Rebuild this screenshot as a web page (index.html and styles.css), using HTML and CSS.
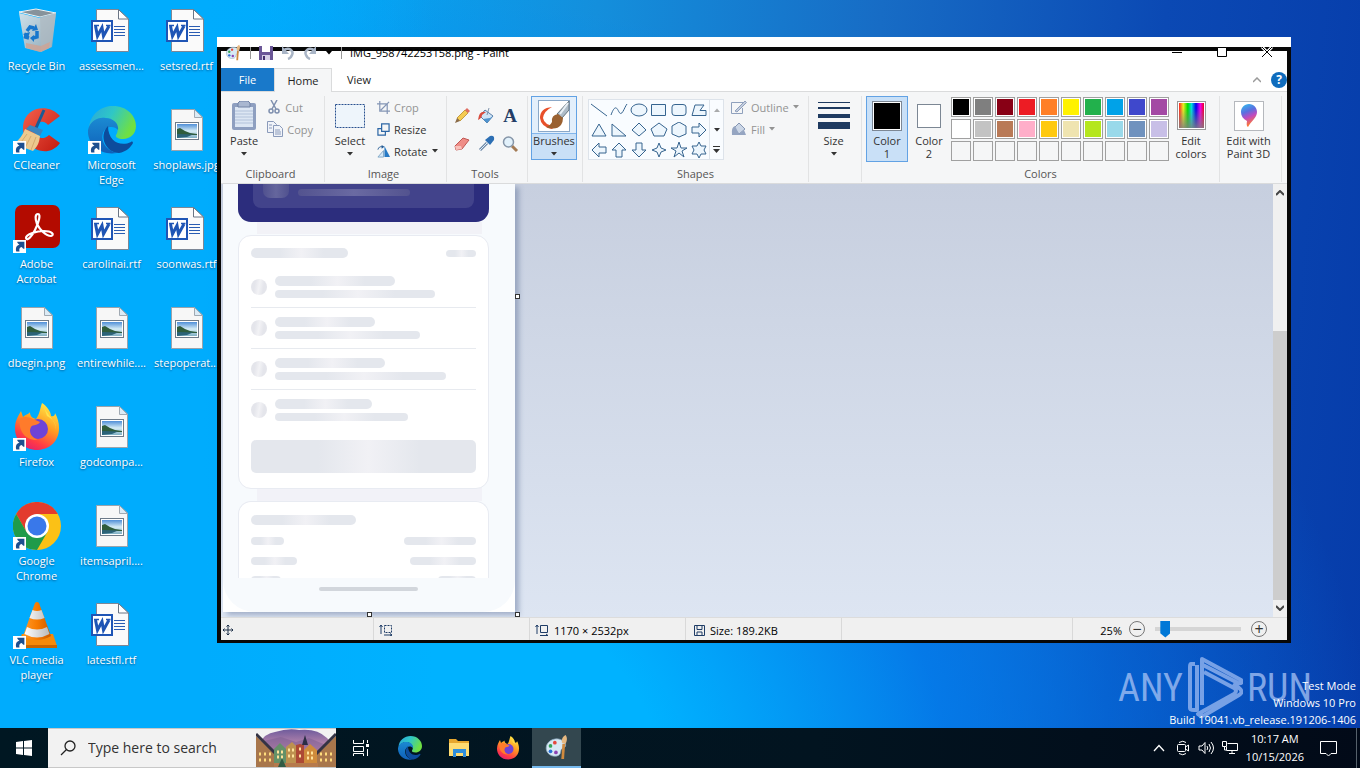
FILE: index.html
```html
<!DOCTYPE html>
<html lang="en">
<head>
<meta charset="utf-8">
<title>Desktop</title>
<link rel="stylesheet" href="styles.css">
</head>
<body>
<svg class="defs" aria-hidden="true">
  <defs>
    <linearGradient id="gSky" x1="0" y1="0" x2="0" y2="1"><stop offset="0" stop-color="#4f8fd8"/><stop offset=".5" stop-color="#d5ecf5"/><stop offset="1" stop-color="#7fb0c4"/></linearGradient>
    <linearGradient id="gEdgeA" x1="0" y1="0" x2="1" y2=".4"><stop offset="0" stop-color="#2aa5dc"/><stop offset=".5" stop-color="#2fc7c6"/><stop offset="1" stop-color="#6fe043"/></linearGradient>
    <linearGradient id="gEdgeB" x1="0" y1="0" x2="0" y2="1"><stop offset="0" stop-color="#1b8ad2"/><stop offset="1" stop-color="#0f5fb8"/></linearGradient>
    <linearGradient id="gFox" x1=".8" y1="0" x2=".3" y2="1"><stop offset="0" stop-color="#fff14a"/><stop offset=".45" stop-color="#ff9a22"/><stop offset=".8" stop-color="#ff3b45"/><stop offset="1" stop-color="#e4206e"/></linearGradient>
    <linearGradient id="gBin" x1="0" y1="0" x2="1" y2="1"><stop offset="0" stop-color="#dfe5e8"/><stop offset="1" stop-color="#9aa8b2"/></linearGradient>
    <linearGradient id="gCone" x1="0" x2="1" y1="0" y2="0"><stop offset="0" stop-color="#ff9a2a"/><stop offset=".5" stop-color="#f77b00"/><stop offset="1" stop-color="#c95a00"/></linearGradient>
    <linearGradient id="gWhiteCone" x1="0" x2="1" y1="0" y2="0"><stop offset="0" stop-color="#fff"/><stop offset="1" stop-color="#b9b9b9"/></linearGradient>
    <linearGradient id="gRed" x1="0" y1="0" x2="1" y2="1"><stop offset="0" stop-color="#f4604c"/><stop offset="1" stop-color="#c21a10"/></linearGradient>
    <linearGradient id="gPin" x1="0" y1="0" x2=".3" y2="1"><stop offset="0" stop-color="#2fc3ee"/><stop offset=".4" stop-color="#5a6fe0"/><stop offset=".65" stop-color="#c04ac0"/><stop offset="1" stop-color="#ff7a30"/></linearGradient>
    <linearGradient id="gDusk" x1="0" y1="0" x2="0" y2="1"><stop offset="0" stop-color="#6e5b9c"/><stop offset=".5" stop-color="#c88fb0"/><stop offset="1" stop-color="#f2b47c"/></linearGradient>
    <linearGradient id="gRainbow" x1="0" x2="1" y1="0" y2="0"><stop offset="0" stop-color="#f22"/><stop offset=".17" stop-color="#ee2"/><stop offset=".35" stop-color="#0d0"/><stop offset=".5" stop-color="#0dd"/><stop offset=".68" stop-color="#00e"/><stop offset=".85" stop-color="#e0e"/><stop offset="1" stop-color="#e02"/></linearGradient>
    <linearGradient id="gGray" x1="0" y1="0" x2="0" y2="1"><stop offset=".2" stop-color="#808080" stop-opacity="0"/><stop offset="1" stop-color="#808080" stop-opacity=".85"/></linearGradient>
  </defs>
  <symbol id="shortcut" viewBox="0 0 12 12"><rect width="12" height="12" fill="#fff"/><path d="M3 10.500C2 7 3.500 4.500 6 4.500L4 2.500V1.500H10.500V8H9.500L8 6.500C6 7 5.500 8.500 6 10.500z" fill="#1d4f8f"/></symbol>
  <symbol id="word" viewBox="0 0 48 48">
    <path d="M8.500 2.500H30.500L40.500 12V44.500H8.500z" fill="#fafafa" stroke="#7d8796"/>
    <path d="M30.500 2.500V12H40.500z" fill="#fff" stroke="#6b7584"/>
    <path d="M26 19.500H37M26 22.500H37M26 25.500H37M26 28.500H37" stroke="#2a5cb2"/>
    <rect x="4" y="14" width="20" height="20" fill="#fff" stroke="#1f55b5" stroke-width="2"/>
    <path d="M7.500 19L9.500 29L14 20.500L15.500 29L21 19" fill="none" stroke="#1f55b5" stroke-width="3"/>
    <path d="M6 18.500H11M18 18.500H22.500" stroke="#1f55b5" stroke-width="1.500"/>
  </symbol>
  <symbol id="photo" viewBox="0 0 48 48">
    <path d="M8.500 3.500H31.500L39.500 11V44.500H8.500z" fill="#f7f7f7" stroke="#9aa3ac"/>
    <path d="M31.500 3.500V11.500H39.500z" fill="#dcebf5" stroke="#a0a9b2"/>
    <rect x="12.500" y="16.500" width="23" height="17" fill="#fff" stroke="#6d7a88"/>
    <rect x="14" y="18" width="20" height="14" fill="url(#gSky)"/>
    <path d="M14 23L17 22L22 25L27 27L34 28V29H14z" fill="#2f5c3c"/>
    <path d="M14 28L30 28.500L24 31L14 32z" fill="#2c6378"/>
  </symbol>
  <symbol id="bin" viewBox="0 0 48 48">
    <path d="M6 6L12 41L28 45L39 40L43 6L27 11z" fill="url(#gBin)" opacity=".92"/>
    <path d="M6 5L23 2L43 6L27 10z" fill="#87939b" stroke="#eef3f5"/>
    <path d="M27 10L28 45L38 40L43 6z" fill="#aeb8bf" opacity=".7"/>
    <path d="M13 36L28 39L37 35L36 41L27 45L13 41z" fill="#cfa392" opacity=".8"/>
    <g fill="none" stroke="#1777cd" stroke-width="3.500"><path d="M14 24L17 20L21 21"/><path d="M24 24L24 30L20 31"/><path d="M16 31L12.500 30L13.500 26"/></g>
    <path d="M19 24L25 23L23 17zM21 28V35L17 31zM10 27L17 25L15 31z" fill="#1777cd"/>
  </symbol>
  <symbol id="ccleaner" viewBox="0 0 48 48">
    <path d="M47 10C36-3 12 0 10 20C9 43 35 54 47 37L36 29C28 36 21 30 22 23C24 14 32 14 35 19z" fill="url(#gRed)"/>
    <path d="M31 4L23 22" stroke="#1a5b94" stroke-width="3"/>
    <path d="M17 19L30 24L27 30L13 23z" fill="#3a86c0"/>
    <path d="M12 23L27 30C26 38 24 41 20 45L1 38C6 34 10 29 12 23z" fill="#ecc98f"/>
    <path d="M14 28L6 39M18 30L12 42M23 31L18 44" stroke="#d4ab6e"/>
  </symbol>
  <symbol id="edge" viewBox="0 0 48 48">
    <path d="M1 22C2 8 13 0 25 0C39 0 48 10 48 20C48 28 42 33 35 33C30 33 27 31 28 29C32 24 29 14 18 12C10 11 4 16 1 22z" fill="url(#gEdgeA)"/>
    <path d="M0 24C2 15 10 11 17 12C26 12 31 18 30 24C27 20 18 19 15 27C12 36 19 45 29 47C12 50-1 38 0 24z" fill="url(#gEdgeB)"/>
    <path d="M20 20C10 30 18 47 31 47C38 46 43 41 45 37C45 36 44 35 43 36C33 41 20 36 20 20z" fill="#0d4c9c"/>
  </symbol>
  <symbol id="acrobat" viewBox="0 0 48 48">
    <rect x="2" y="0" width="45" height="43" rx="7" fill="#b30b00"/>
    <path d="M25 9C22 9 22 14 24 19C27 25 33 31 38 31C42 30 39 26 31 26C24 26 13 29 13 33C14 37 19 31 22 25C26 17 28 9 25 9z" fill="none" stroke="#fff" stroke-width="2.200"/>
  </symbol>
  <symbol id="firefox" viewBox="0 0 48 48">
    <path d="M29 0C34 3 38 9 38 13C41 14 42 12 42 10C50 24 47 45 25 47C10 47 2 37 2 25C2 17 6 12 8 8L10 14C13 11 16 11 17 9C17 13 19 15 23 16C27 11 27 5 29 0z" fill="url(#gFox)"/>
    <circle cx="25" cy="26" r="10" fill="#6f43d6"/>
    <path d="M7 16C13 11 21 17 27 19C25 23 20 21 18 24C15 29 19 35 25 37C12 38 5 27 7 16z" fill="#ff7b2b"/>
    <path d="M31 4C34 12 43 17 43 27C43 20 40 16 34 13z" fill="#ffe34c"/>
  </symbol>
  <symbol id="chrome" viewBox="0 0 48 48">
    <circle cx="24" cy="24" r="24" fill="#fbc116"/>
    <path d="M3.200 12A24 24 0 0 1 44.800 12H24L13.600 30z" fill="#e33b2e"/>
    <path d="M3.200 12A24 24 0 0 0 24 48L34.400 30L24 36L13.600 30z" fill="#1f9b4a"/>
    <circle cx="24" cy="24" r="12" fill="#fff"/><circle cx="24" cy="24" r="9.500" fill="#3978ea"/>
  </symbol>
  <symbol id="vlc" viewBox="0 0 48 48">
    <path d="M9 33H40L44 45H4z" fill="#f58a0a"/><path d="M4 44H44V47H4z" fill="#c96500"/>
    <path d="M22 2Q24 0 26 2L38 35Q24 43 10 35z" fill="url(#gCone)"/>
    <path d="M19.500 9Q24 11 28.500 9L31.500 17Q24 20 16.500 17zM14 26Q24 31 34 26L36.500 33Q24 40 11.500 33z" fill="url(#gWhiteCone)"/>
  </symbol>
  <symbol id="palette" viewBox="0 0 24 24">
    <path d="M2 13C2 7 9 3 15 5C21 7 21 12 18 13C14 14 17 18 13 20C7 22 2 18 2 13z" fill="#d7e9f5" stroke="#8aa6bc" stroke-width=".7"/>
    <circle cx="6" cy="11" r="1.700" fill="#35a35a"/><circle cx="10" cy="8" r="1.700" fill="#e5483d"/><circle cx="6" cy="16" r="1.700" fill="#2a70d6"/><circle cx="11" cy="17" r="1.700" fill="#8b43b4"/>
    <path d="M17 9L16 23L18.500 23L19.500 9z" fill="#d08a3e"/><path d="M16.500 8C16 4 18 2 20 1C22 4 21 7 20 9z" fill="#e7b982"/>
  </symbol>
  <symbol id="save" viewBox="0 0 14 14"><path d="M0 0H14V14H0z" fill="#6b5797"/><path d="M3 0H11V6H3z" fill="#fff"/><path d="M3 9H11V14H3z" fill="#d7d0e6"/><path d="M4 10H6V14H4z" fill="#44306e"/></symbol>
  <symbol id="undo" viewBox="0 0 14 14"><path d="M2 5C8 0 13 5 11 9Q10 12 7 13" fill="none" stroke="#a9b5c6" stroke-width="2.500"/><path d="M1 0V8H8z" fill="#a9b5c6"/></symbol>
  <symbol id="caret" viewBox="0 0 6 4"><path d="M0 0H6L3 3.500z" fill="currentColor"/></symbol>
  <symbol id="resize" viewBox="0 0 14 14" fill="none" stroke="#2c66a5" stroke-width="1.300"><path d="M5 1H13V9H5zM5 6H1V13H9V9"/></symbol>
  <symbol id="crop" viewBox="0 0 14 14" fill="none" stroke="#8495b5" stroke-width="1.300"><path d="M3 0V11H14M0 3H11V14M4 10L13 1"/></symbol>
  <symbol id="rotate" viewBox="0 0 14 14"><path d="M8 1V13H14z" fill="#267ac5"/><path d="M7 6V13H1z" fill="#d5e9f8" stroke="#7fa6c7"/><path d="M1 5Q2 1 6 2" fill="none" stroke="#245b94"/><path d="M5 0L8 2L5 4z" fill="#245b94"/></symbol>
  <symbol id="dims" viewBox="0 0 14 12" fill="none" stroke="#1e3c66"><path d="M2 10V1M0.500 3L2 1L3.500 3M5 11.500H13M11 10L13 11.500L11 12M5.500 1.500H12.500V8.500H5.500z"/></symbol>
  <symbol id="seldims" viewBox="0 0 14 12" fill="none" stroke="#1e3c66"><path d="M2 10V1M0.500 3L2 1L3.500 3M5 11H13M11 9.500L13 11L11 12"/><path d="M5.500 1.500H12.500V8.500H5.500z" stroke-dasharray="2 1"/></symbol>
</svg>

<main class="desktop">
  <div class="icons" id="icons"></div>

  <div class="watermark" aria-hidden="true">
    <span>ANY</span>
    <svg width="56" height="62" viewBox="0 0 56 62" fill="none" stroke="#9dbbf2" stroke-opacity=".75" stroke-width="4" stroke-linejoin="round"><path d="M8 7H4Q3 7 3 10V51Q3 53 7 53H10V8M15 48V2L54 23Q56 27 51 26L16 8M17 15L47 31Q51 34 47 37L11 57Q14 60 18 58L52 38Q57 35 52 31L46 27"/></svg>
    <span>RUN</span>
  </div>
  <div class="build"><span>Test Mode</span><span>Windows 10 Pro</span><span>Build 19041.vb_release.191206-1406</span></div>

  <section class="window" aria-label="Paint">
    <header class="titlebar">
      <svg width="17" height="17"><use href="#palette"/></svg><i class="tsep"></i>
      <button aria-label="Save" class="qa"><svg width="14" height="14"><use href="#save"/></svg></button>
      <button aria-label="Undo" class="qa"><svg width="14" height="14"><use href="#undo"/></svg></button>
      <button aria-label="Redo" class="qa redo"><svg width="14" height="14"><use href="#undo"/></svg></button>
      <button aria-label="Customize toolbar" class="qa more"><svg width="6" height="4"><use href="#caret"/></svg></button><i class="tsep"></i>
      <span class="title">IMG_958742253158.png - Paint</span>
      <span class="winbtns">
        <button aria-label="Minimize"><svg width="12" height="12" stroke="#000"><path d="M1 5.500H11"/></svg></button>
        <button aria-label="Maximize"><svg width="12" height="12" stroke="#000" fill="#fff"><path d="M1.500 .5H10.500V9.500H1.500z"/></svg></button>
        <button aria-label="Close"><svg width="12" height="12"><path d="M1 0L11 10M11 0L1 10" stroke="#fff" stroke-width="3"/><path d="M1 0L11 10M11 0L1 10" stroke="#000"/></svg></button>
      </span>
    </header>
    <nav class="tabs">
      <button class="tab file">File</button><button class="tab home">Home</button><button class="tab">View</button>
      <button class="collapse" aria-label="Minimize ribbon"><svg width="8" height="6" fill="none" stroke="#9a9a9a" stroke-width="1.500"><path d="M0 5L4 1L8 5"/></svg></button>
      <button class="help" aria-label="Help">?</button>
    </nav>
    <div class="ribbon">
      <div class="group clipboard">
        <div class="tools-row">
          <button class="big"><span class="pic"><svg width="26" height="30" viewBox="0 0 26 30"><rect x="1" y="2" width="24" height="27" rx="2" fill="#8e9fc0"/><path d="M4 6H22V26H4z" fill="#dce6f3"/><path d="M7 2L9 0H17L19 2V6H7z" fill="#a9b7d0" stroke="#7182a5"/><path d="M4 10H22M4 13H22M4 16H22M4 19H22M4 22H22" stroke="#b2c2da"/></svg></span><span>Paste</span><svg class="caret"><use href="#caret"/></svg></button>
          <div class="list dim">
            <button><svg width="14" height="14" viewBox="0 0 14 14" fill="none" stroke="#7e8fae" stroke-width="1.500"><path d="M4 0L9 9M10 0L5 9"/><circle cx="4" cy="11" r="2"/><circle cx="10" cy="11" r="2"/></svg><span>Cut</span></button>
            <button><svg width="16" height="16" viewBox="0 0 16 16" fill="#f0f3f9" stroke="#8a9aba"><path d="M.5.500H6.500L9.500 3.500V11.500H.5z"/><path d="M6.500 4.500H12.500L15.500 7.500V15.500H6.500z"/><path d="M2 4H5M2 7H5M8 9H13M8 11H14M8 13H14"/></svg><span>Copy</span></button>
          </div>
        </div>
        <div class="caption">Clipboard</div>
      </div>
      <div class="group image">
        <div class="tools-row">
          <button class="big"><span class="pic"><svg width="30" height="24"><rect x=".5" y=".5" width="29" height="23" fill="#eef5fb" stroke="#28508f" stroke-dasharray="2 1"/></svg></span><span>Select</span><svg class="caret"><use href="#caret"/></svg></button>
          <div class="list">
            <button class="off"><svg width="13" height="13"><use href="#crop"/></svg><span>Crop</span></button>
            <button><svg width="13" height="13"><use href="#resize"/></svg><span>Resize</span></button>
            <button><svg width="13" height="13"><use href="#rotate"/></svg><span>Rotate</span><svg class="caret"><use href="#caret"/></svg></button>
          </div>
        </div>
        <div class="caption">Image</div>
      </div>
      <div class="group tools">
        <div class="toolgrid">
          <button aria-label="Pencil"><svg width="18" height="18" viewBox="0 0 18 18"><path d="M4 11L12 3L15 6L7 14z" fill="#f5cb52" stroke="#b78a29" stroke-width=".8"/><path d="M12 3L14 1L17 4L15 6z" fill="#e06d61"/><path d="M4 11L2 16L7 14z" fill="#8a6c4a"/></svg></button>
          <button aria-label="Fill with color"><svg width="18" height="18" viewBox="0 0 18 18"><path d="M8 3L16 9L10 16L3 9z" fill="#cfe4f6" stroke="#587ea7"/><path d="M13 11L16 9L10 16L6 12z" fill="#4e93cf"/><path d="M9 5Q2 3 1 13Q5 11 5 8z" fill="#d84b3d"/><path d="M10 8L12 1" stroke="#8094ad"/></svg></button>
          <button aria-label="Text" class="text-tool">A</button>
          <button aria-label="Eraser"><svg width="18" height="18" viewBox="0 0 18 18"><path d="M2 11L10 3L16 5L9 14L3 15z" fill="#ef8d87" stroke="#bf5854"/><path d="M2 11L8 11L9 14L3 15z" fill="#f9c1bb"/></svg></button>
          <button aria-label="Color picker"><svg width="18" height="18" viewBox="0 0 18 18"><path d="M3 15L10 8" stroke="#6e8aa8" stroke-width="3"/><path d="M3 15L10 8" stroke="#e0edf8" stroke-width="1"/><path d="M8 5L13 10L17 5Q18 0 13 1z" fill="#2c6fb4"/></svg></button>
          <button aria-label="Magnifier"><svg width="18" height="18" viewBox="0 0 18 18"><path d="M11 11L16 16" stroke="#a37b55" stroke-width="3"/><circle cx="7.500" cy="7" r="5" fill="#e2f1fb" stroke="#8595a8" stroke-width="1.500"/></svg></button>
        </div>
        <div class="caption">Tools</div>
      </div>
      <div class="group brushes">
        <button class="big selected"><span class="pic"><svg width="32" height="32" viewBox="0 0 32 32"><rect x=".5" y=".5" width="31" height="31" fill="#fff" stroke="#8aa8c8"/><path d="M14 7Q2 8 2 18Q3 27 14 29L17 26Q6 25 5 18Q6 11 14 7z" fill="#e8502a"/><path d="M31 1L19 14L24 18L31 10z" fill="#aebcc8" stroke="#66757f"/><path d="M30 3L22 14" stroke="#e9f0f5" stroke-width="2"/><path d="M20 14Q13 15 14 22Q12 26 8 27Q18 31 23 25Q25 22 25 18z" fill="#9a6131"/></svg></span><span>Brushes</span><svg class="caret"><use href="#caret"/></svg></button>
      </div>
      <div class="group shapes">
        <div class="tools-row">
          <div class="gallery">
            <div class="shapegrid" id="shapes"></div>
            <div class="scroller"><button aria-label="Up"><svg class="caret flip"><use href="#caret"/></svg></button><button aria-label="Down"><svg class="caret"><use href="#caret"/></svg></button><button aria-label="More shapes"><svg width="7" height="8" viewBox="0 0 7 8"><path d="M0 .5H7" stroke="#333"/><path d="M0 3H7L3.500 7z" fill="#333"/></svg></button></div>
          </div>
          <div class="list dim">
            <button><svg width="16" height="15" viewBox="0 0 16 15" fill="none" stroke="#8fa0bc"><path d="M12 2.500H.5V13.500H11.500V8"/><path d="M4 11L14 1L15.500 2.500L6 12z" fill="#c4cddd"/></svg><span>Outline</span><svg class="caret"><use href="#caret"/></svg></button>
            <button><svg width="16" height="16" viewBox="0 0 16 16"><path d="M8 2L14 8L8 13L3 7z" fill="#cbd6e6" stroke="#8495b2"/><path d="M4 5Q0 6 1 14H15L13 9L8 13z" fill="#95a5c1"/></svg><span>Fill</span><svg class="caret"><use href="#caret"/></svg></button>
          </div>
        </div>
        <div class="caption">Shapes</div>
      </div>
      <div class="group size">
        <button class="big"><span class="pic"><svg width="32" height="28" fill="#1e3a60"><path d="M0 0H32V1H0zM0 5H32V7H0zM0 12H32V16H0zM0 20H32V27H0z"/></svg></span><span>Size</span><svg class="caret"><use href="#caret"/></svg></button>
      </div>
      <div class="group colors">
        <div class="tools-row">
          <button class="big color selected"><span class="pic"><i class="swatch black"></i></span><span>Color<br>1</span></button>
          <button class="big color"><span class="pic"><i class="swatch white"></i></span><span>Color<br>2</span></button>
          <div class="palette" id="palette-grid"></div>
          <button class="big edit"><span class="pic"><svg width="29" height="29"><rect x=".5" y=".5" width="28" height="28" fill="#fff" stroke="#999"/><rect x="2" y="2" width="25" height="25" fill="url(#gRainbow)"/><rect x="2" y="2" width="25" height="25" fill="url(#gGray)"/></svg></span><span>Edit<br>colors</span></button>
        </div>
        <div class="caption">Colors</div>
      </div>
      <div class="group three-d">
        <button class="big"><span class="pic"><svg width="30" height="30"><rect x=".5" y=".5" width="29" height="29" fill="#fff" stroke="#b5b8bd"/><path d="M15 3C20 3 23 7 23 11C23 17 17 20 14 26Q12 25 13 20C9 18 7 15 7 11C7 7 10 3 15 3z" fill="url(#gPin)"/></svg></span><span>Edit with<br>Paint 3D</span></button>
      </div>
    </div>

    <div class="workspace">
      <div class="canvas">
        <div class="sheet">
          <div class="sheet-page">
            <div class="hero"><div class="hero-panel"><i></i><b></b></div></div>
            <div class="card first">
              <div class="pair"><i class="bar w97"></i><i class="bar tiny w30"></i></div>
              <div class="entry"><i class="dot"></i><div><i class="bar w120"></i><i class="bar thin w160"></i></div></div>
              <div class="entry"><i class="dot"></i><div><i class="bar w100"></i><i class="bar thin w145"></i></div></div>
              <div class="entry"><i class="dot"></i><div><i class="bar w110"></i><i class="bar thin w171"></i></div></div>
              <div class="entry"><i class="dot"></i><div><i class="bar w97"></i><i class="bar thin w133"></i></div></div>
              <i class="bar action"></i>
            </div>
            <div class="card second">
              <i class="bar w105"></i>
              <div class="pair"><i class="bar thin w33"></i><i class="bar thin w72"></i></div>
              <div class="pair"><i class="bar thin w46"></i><i class="bar thin w66"></i></div>
              <div class="pair"><i class="bar thin w30"></i><i class="bar thin w38"></i></div>
            </div>
            <i class="home-line"></i>
          </div>
          <i class="handle right"></i><i class="handle bottom"></i><i class="handle corner"></i>
        </div>
      </div>
      <div class="scrollbar"><svg width="8" height="6"><path d="M0 5L4 1L8 5" fill="none" stroke="#444" stroke-width="2"/></svg><i></i><svg width="8" height="6"><path d="M0 1L4 5L8 1" fill="none" stroke="#444" stroke-width="2"/></svg></div>
    </div>

    <footer class="status">
      <span class="cell first-cell"><svg width="12" height="12" fill="none" stroke="#1e3049"><path d="M6 1V11M1 6H11M4.500 2.500L6 1L7.500 2.500M4.500 9.500L6 11L7.500 9.500M2.500 4.500L1 6L2.500 7.500M9.500 4.500L11 6L9.500 7.500"/></svg></span>
      <span class="cell"><svg width="14" height="12"><use href="#seldims"/></svg></span>
      <span class="cell"><svg width="14" height="12"><use href="#dims"/></svg>1170 × 2532px</span>
      <span class="cell disk"><svg width="11" height="11" fill="none" stroke="#1e3c66"><path d="M.5.500H10.500V10.500H.5zM3 .5V4.500H8V.5M3 10V7H8V10"/></svg>Size: 189.2KB</span>
      <span class="cell rest"></span>
      <label class="zoomtext" for="zoom">25%</label>
      <button class="round" aria-label="Zoom out">−</button>
      <input id="zoom" type="range" min="0" max="100" value="7">
      <button class="round" aria-label="Zoom in">+</button>
    </footer>
  </section>
</main>

<footer class="taskbar">
  <button class="task" aria-label="Start"><svg width="16" height="16" fill="#fff"><path d="M0 2L7 1V7.500H0zM8 1L16 0V7.500H8zM0 8.500H7V15L0 14zM8 8.500H16V16L8 15z"/></svg></button>
  <label class="search"><svg width="16" height="16" fill="none" stroke="#222" stroke-width="1.300"><circle cx="10" cy="6" r="5"/><path d="M6.500 9.500L1 15"/></svg>
    <input type="text" placeholder="Type here to search" aria-label="Search">
    <svg class="town" width="80" height="38" viewBox="0 0 80 38"><path d="M3 15Q9 4 19 3Q32-1 43 1Q61-1 71 9L77 16V38H3z" fill="url(#gDusk)"/><path d="M8 12L25 8L40 13L53 9L70 16V25H8z" fill="#806095" opacity=".6"/><path d="M0 7L20 26V38H0zM80 7L60 26V38H80z" fill="#a8764b"/><path d="M0 5L22 27M80 5L58 27" stroke="#343344" stroke-width="3"/><path d="M18 38V20L24 14L30 20V38z" fill="#649168"/><path d="M30 38V18L36 13L41 18V38z" fill="#bd914f"/><path d="M40 38V16L44 15L48 16V38z" fill="#ad4935"/><path d="M46 16L49 6L52 16z" fill="#2b2d45"/><path d="M48 38V21L54 15L61 21V38z" fill="#cf8b3c"/><path d="M21 23H27M21 28H27M32 21H39M32 27H39M43 20H47M43 27H47M51 24H58M51 29H58" stroke="#ffe29a" stroke-width="3" stroke-dasharray="2 2"/><path d="M3 25H16M3 31H16M64 25H77M64 31H77" stroke="#ffdc7c" stroke-width="3" stroke-dasharray="2 3"/><path d="M18 38V34H62V38z" fill="#b67a4d"/><path d="M22 38L26 29L30 38z" fill="#315c45"/></svg>
  </label>
  <button class="task" aria-label="Task view"><svg width="18" height="16" fill="none" stroke="#fff"><path d="M1.500 0V3.500H11.500V0M1.500 6.500H11.500V11.500H1.500zM1.500 16V13.500H11.500V16M15.500 0V3M15.500 9V16"/><path d="M15.500 4V7" stroke-width="3"/></svg></button>
  <button class="task" aria-label="Edge"><svg width="24" height="24"><use href="#edge"/></svg></button>
  <button class="task" aria-label="File Explorer"><svg width="22" height="20"><path d="M1 1H8L10 3H21V18H1z" fill="#e7a72e"/><path d="M1 5H21V18H1z" fill="#ffdc72"/><path d="M5 11H18V19H15V15H8V19H5z" fill="#2f8edb"/></svg></button>
  <button class="task" aria-label="Firefox"><svg width="24" height="24"><use href="#firefox"/></svg></button>
  <button class="task active" aria-label="Paint"><svg width="26" height="26"><use href="#palette"/></svg></button>
  <div class="tray">
    <button aria-label="Hidden icons"><svg width="12" height="8" fill="none" stroke="#fff" stroke-width="1.300"><path d="M1 7L6 1.500L11 7"/></svg></button>
    <button aria-label="Meet now"><svg width="14" height="16" fill="none" stroke="#fff"><rect x="1.500" y="4.500" width="8" height="7" rx="1"/><path d="M9.500 7L12.500 5V11L9.500 9M3 2.500Q7 0 10 2.500M3 13.500Q7 16 10 13.500"/></svg></button>
    <button aria-label="Volume"><svg width="17" height="14" fill="none" stroke="#fff"><path d="M1 5H4L7 1.500V12.500L4 9H1zM9 5Q10.500 7 9 9M11 3Q14 7 11 11M13 1Q18 7 13 13"/></svg></button>
    <button aria-label="Network"><svg width="17" height="14" fill="none" stroke="#fff"><path d="M5.500 2.500H15.500V9.500H4.500V6M7 12.500H13M10 9.500V12.500M.5.500H4.500V5.500H.5zM2.500 5.500V9H4"/></svg></button>
    <time class="clock"><span>10:17 AM</span><span>10/15/2026</span></time>
    <button class="notice" aria-label="Notifications"><svg width="17" height="17" fill="none" stroke="#fff"><path d="M.5 1.500H16.500V13.500H11L8.500 16L6 13.500H.5z"/></svg></button>
    <i class="peek"></i>
  </div>
</footer>
<script src="app.js"></script>
</body>
</html>
```
FILE: styles.css
```css
* { box-sizing: border-box; }
body { margin: 0; height: 100vh; display: flex; flex-direction: column; overflow: hidden; font: 11px/15px "Open Sans", "Noto Sans", sans-serif; color: #222; }
button { font: inherit; color: inherit; border: 0; background: none; padding: 0; display: flex; align-items: center; justify-content: center; }
svg { flex: none; display: block; }
.defs { position: absolute; width: 0; height: 0; }
i { display: block; }

.desktop { position: relative; flex: 1; min-height: 0; background:
  linear-gradient(90deg, #00acfd 15%, rgba(0, 172, 253, 0) 32%),
  radial-gradient(ellipse at 26% 110%, #00b2ff 22%, rgba(0, 130, 245, .75) 42%, rgba(0, 100, 235, 0) 72%),
  linear-gradient(95deg, #00a8fc 0%, #00acfc 18%, #148fdc 42%, #176cc5 62%, #0b49b4 82%, #063caa 100%); }
.icons { display: grid; grid-template-rows: repeat(7, 99px); grid-auto-flow: column; grid-auto-columns: 75px; justify-content: start; margin-left: -1px; }
.shortcut { display: flex; flex-direction: column; align-items: center; gap: 3px; padding-top: 7px; color: #fff; text-decoration: none; text-align: center; white-space: nowrap; text-shadow: 0 1px 2px rgba(0, 30, 70, .6); }
.glyph { position: relative; }
.glyph .arrow { position: absolute; left: 0; bottom: 0; }

.watermark { position: absolute; right: 48px; bottom: 9px; display: flex; align-items: center; gap: 4px; font: 38px/62px "Liberation Sans Narrow", "Roboto Condensed", "DejaVu Sans Condensed", sans-serif; color: rgba(168, 195, 245, .75); }
.build { position: absolute; right: 4px; bottom: 0; display: flex; flex-direction: column; text-align: right; color: #fff; line-height: 17px; }

.window { position: absolute; left: 217px; right: 69px; top: 37px; bottom: 85px; display: flex; flex-direction: column; padding: 0 4px 3px; background: #fff; }
.window::before { content: ""; position: absolute; inset: 10px 0 0; border: 4px solid #080808; border-bottom-width: 3px; }
.window > * { position: relative; }
.titlebar { height: 31px; display: flex; align-items: center; gap: 8px; padding: 0 14px 0 4px; color: #000; }
.tsep { width: 1px; height: 12px; background: #999; }
.qa { width: 14px; height: 20px; }
.redo { transform: scaleX(-1); }
.more { width: 8px; }
.title { flex: 1; }
.winbtns { display: flex; gap: 33px; }
.tabs { height: 24px; display: flex; align-items: stretch; border-bottom: 1px solid #dadbdc; }
.tab { padding: 0 15px; }
.file { width: 53px; background: #1979ca; color: #fff; }
.home { width: 58px; background: #f5f6f7; border: 1px solid #dadbdc; border-bottom: 0; margin-bottom: -1px; }
.collapse { margin-left: auto; width: 28px; }
.help { width: 16px; height: 16px; border-radius: 50%; background: #0f6cbd; color: #fff; font-weight: 700; font-size: 12px; align-self: center; }

.ribbon { height: 92px; display: flex; background: #f5f6f7; border-bottom: 1px solid #dadbdc; padding-top: 4px; overflow: hidden; color: #333; }
.group { flex: none; display: flex; flex-direction: column; justify-content: space-between; border-right: 1px solid #e2e3e4; padding: 0 4px 1px; height: 86px; }
.clipboard { width: 104px; padding: 0 11px 1px 7px; }
.image { width: 122px; padding: 0 5px 1px 1px; }
.tools { width: 81px; padding: 0 7px 1px 3px; }
.brushes { width: 55px; padding: 0 5px 0 3px; }
.shapes { width: 226px; }
.size { width: 53px; padding: 0 5px 0 2px; }
.colors { width: 358px; }
.three-d { width: 62px; padding: 0 4px 0 0; }
.caption { text-align: center; color: #555; }
.tools-row { display: flex; align-items: flex-start; }
.big { flex-direction: column; justify-content: flex-start; width: 100%; line-height: 13px; text-align: center; white-space: nowrap; border: 1px solid transparent; }
.tools-row .big { width: 44px; }
.clipboard .tools-row .big { width: 34px; }
.pic { height: 37px; display: flex; align-items: center; }
.caret { width: 6px; height: 4px; }
.big .caret { margin-top: 5px; }
.flip { transform: rotate(180deg); opacity: .4; }
.image .tools-row .big { width: 48px; }
.list { display: flex; flex-direction: column; padding-left: 7px; }
.image .list { padding-left: 3px; }
.list button { height: 22px; gap: 4px; justify-content: flex-start; }
.dim, .off { color: #939393; }
.toolgrid { display: grid; grid-template-columns: repeat(3, 24px); grid-template-rows: 28px 28px; padding-top: 6px; }
.text-tool { font: bold 19px/20px "Liberation Serif", serif; color: #243d66; }
.selected { background: #c9e0f7; border-color: #62a2e4; }
.brushes .selected { height: 64px; background: linear-gradient(#e3effb 36px, #83b5e9 36px, #83b5e9 37px, #c9e0f7 37px); }
.gallery { display: flex; margin: 3px 0 0 1px; border: 1px solid #dde3ea; background: #f9fcff; }
.shapegrid { display: grid; grid-template-columns: repeat(6, 20px); grid-template-rows: 20px 20px 19px; }
.shapegrid button svg { width: 18px; height: 16px; fill: #edf6fd; stroke: #36648f; stroke-width: 1; }
.scroller { width: 14px; display: grid; grid-template-rows: 20px 20px 19px; border-left: 1px solid #dde3ea; }
.color { height: 66px; }
.tools-row .color { width: 42px; }
.swatch { width: 30px; height: 30px; border: 1px solid #7c8794; background: #fff; }
.black { background: #000; box-shadow: inset 0 0 0 1px #fff; }
.white { width: 24px; height: 24px; }
.palette { display: grid; grid-template-columns: repeat(10, 20px); grid-auto-rows: 20px; gap: 2px; padding: 1px 0 0 1px; }
.palette button { border: 1px solid #a0a0a0; padding: 1px; background: #f5f6f7; }
.palette button.filled { background: #fff; }
.palette i { width: 100%; height: 100%; }

.workspace { flex: 1; min-height: 0; display: flex; background: linear-gradient(#c7cfdf, #dde5f2); }
.canvas { flex: 1; padding-left: 2px; overflow: hidden; }
.sheet { position: relative; width: 292px; height: calc(100% - 5px); background: #fff; box-shadow: 4px 3px 5px rgba(90, 110, 150, .45); }
.sheet-page { height: 100%; background: #f7fafd; border-radius: 0 0 32px 32px; padding: 0 26px 0 15px; display: flex; flex-direction: column; }
.hero { height: 38px; flex: none; background: #2c2d7d; border-radius: 0 0 13px 13px; padding: 0 15px; box-shadow: 6px 25px 0 -13px #f2f2f7; }
.hero-panel { height: 24px; background: #42438b; border-radius: 0 0 8px 8px; display: flex; align-items: flex-start; gap: 9px; padding-left: 10px; }
.hero-panel i { width: 26px; height: 14px; border-radius: 0 0 7px 7px; background: linear-gradient(90deg, #50518f, #65669d, #50518f); }
.hero-panel b { width: 112px; height: 7px; margin-top: 5px; border-radius: 4px; background: linear-gradient(90deg, #53538f, #6a6aa2, #53538f); }
.card { background: #fff; border: 1px solid #e8ebf2; border-radius: 13px; padding: 12px 12px 0; flex: none; }
.first { margin-top: 13px; height: 254px; box-shadow: 6px 25px 0 -13px #f2f2f8; }
.second { margin-top: 12px; height: 77px; overflow: hidden; padding-top: 13px; border-bottom: 0; border-radius: 13px 13px 0 0; }
.pair { display: flex; justify-content: space-between; align-items: center; }
.bar { height: 10px; border-radius: 5px; background: linear-gradient(90deg, #e4e7ed 30%, #f1f1f5 52%, #e4e7ed 75%); }
.thin { height: 8px; }
.tiny { height: 7px; }
.entry { display: flex; align-items: center; gap: 8px; height: 41px; border-bottom: 1px solid #e7eaef; }
.first .pair { margin-bottom: 9px; }
.entry:nth-of-type(5) { border-bottom-color: transparent; }
.entry .thin { margin-top: 4px; }
.dot { width: 16px; height: 16px; border-radius: 50%; background: linear-gradient(100deg, #e4e5eb 25%, #f2f2f5 50%, #e4e5eb 75%); }
.action { height: 33px; border-radius: 5px; margin-top: 9px; }
.second .pair { margin-top: 12px; }
.second .pair:last-child { margin-top: 11px; }
.home-line { width: 99px; height: 4px; border-radius: 2px; background: #d2d6dc; margin: 9px 0 0 81px; flex: none; }
.w30 { width: 30px; } .w33 { width: 33px; } .w38 { width: 38px; } .w46 { width: 46px; } .w66 { width: 66px; } .w72 { width: 72px; }
.w97 { width: 97px; } .w100 { width: 100px; } .w105 { width: 105px; } .w110 { width: 110px; } .w120 { width: 120px; } .w133 { width: 133px; } .w145 { width: 145px; } .w160 { width: 160px; } .w171 { width: 171px; }
.handle { position: absolute; width: 5px; height: 5px; background: #fff; border: 1px solid #333; }
.right { right: -5px; top: 110px; }
.bottom { left: 144px; bottom: -5px; }
.corner { right: -5px; bottom: -5px; }
.scrollbar { width: 14px; background: #f0f0f0; display: flex; flex-direction: column; align-items: center; justify-content: space-between; padding: 6px 0; }
.scrollbar i { width: 100%; height: 64%; background: #cdcdcd; margin-top: auto; margin-bottom: 5px; }

.status { height: 23px; display: flex; align-items: center; background: #f0f0f0; border-top: 1px solid #dcdcdc; padding-right: 20px; color: #000; }
.cell { width: 156px; height: 100%; padding: 2px 0 0 5px; display: flex; align-items: center; gap: 5px; border-right: 1px solid #d9d9d9; }
.first-cell { width: 153px; padding-left: 1px; }
.disk { padding-left: 8px; }
.rest { flex: 1; }
.zoomtext { padding: 2px 7px 0 27px; }
.round { width: 16px; height: 16px; border: 1px solid #777; border-radius: 50%; font: 16px/12px "Open Sans", sans-serif; color: #333; }
input[type="range"] { appearance: none; width: 86px; height: 18px; margin: 0 10px; background: linear-gradient(#d5d5d5, #d5d5d5) center / 100% 4px no-repeat; }
input[type="range"]::-webkit-slider-thumb { appearance: none; width: 10px; height: 17px; background: #0078d7; clip-path: polygon(0 0, 100% 0, 100% 75%, 50% 100%, 0 75%); }

.taskbar { height: 40px; flex: none; display: flex; background: linear-gradient(90deg, #001722, #021420 60%, #020a18); color: #fff; }
.task { width: 49px; }
.task:first-child { width: 48px; }
.search { width: 288px; background: #f2f2f2; display: flex; align-items: center; padding-left: 12px; gap: 12px; border: 1px solid #c8c8c8; border-width: 1px 0; }
.search input { flex: 1; min-width: 0; border: 0; padding: 0; background: none; font: 14px/20px "Open Sans", sans-serif; }
.search input::placeholder { color: #333; opacity: 1; }
.active { background: #33474f; border-bottom: 2px solid #76b9ed; }
.tray { margin-left: auto; display: flex; align-items: center; }
.tray button { width: 24px; height: 40px; }
.clock { display: flex; flex-direction: column; text-align: center; line-height: 18px; padding: 0 3px; }
.tray .notice { width: 43px; margin-right: 6px; }
.peek { width: 4px; height: 40px; border-left: 1px solid #56616b; }
```
FILE: app.js
```js
const icon = (id, size) => `<svg width="${size}" height="${size}"><use href="#${id}"/></svg>`;

const shortcuts = [
  ["bin", "Recycle Bin"], ["ccleaner", "CCleaner", 1], ["acrobat", "Adobe<br>Acrobat", 1], ["photo", "dbegin.png"],
  ["firefox", "Firefox", 1], ["chrome", "Google<br>Chrome", 1], ["vlc", "VLC media<br>player", 1],
  ["word", "assessmen..."], ["edge", "Microsoft<br>Edge", 1], ["word", "carolinai.rtf"], ["photo", "entirewhile...."],
  ["photo", "godcompa..."], ["photo", "itemsapril...."], ["word", "latestfl.rtf"],
  ["word", "setsred.rtf"], ["photo", "shoplaws.jpg"], ["word", "soonwas.rtf"], ["photo", "stepoperat..."]
];
document.getElementById("icons").innerHTML = shortcuts.map(([name, label, linked]) =>
  `<a class="shortcut" href="#"><span class="glyph">${icon(name, 48)}${linked ? '<svg class="arrow" width="13" height="13"><use href="#shortcut"/></svg>' : ""}</span><span>${label}</span></a>`
).join("");

const shapes = [
  ["Line", "M1 2L17 14"], ["Curve", "M1 13C5 2 7 6 9 10C12 15 14 6 17 2"], ["Oval", "M1 8A8 6 0 0 1 17 8A8 6 0 0 1 1 8"],
  ["Rectangle", "M1.500 2.500H15.500V13.500H1.500z"], ["Rounded rectangle", "M5 2.500H13Q16 2.500 16 5V11Q16 13.500 13 13.500H5Q2 13.500 2 11V5Q2 2.500 5 2.500z"],
  ["Polygon", "M2 13.500L5 3H14L10 8.500H16V13.500z"],
  ["Triangle", "M9 2L16 14H2z"], ["Right triangle", "M2 2V14H16z"], ["Diamond", "M9 1L16 8L9 14L2 8z"],
  ["Pentagon", "M9 1L17 7L14 14H4L1 7z"], ["Hexagon", "M9 0L16 4V12L9 15L2 12V4z"], ["Right arrow", "M2 5H9V1L16 8L9 15V11H2z"],
  ["Left arrow", "M16 5H9V1L2 8L9 15V11H16z"], ["Up arrow", "M9 1L16 8H12V15H6V8H2z"], ["Down arrow", "M6 1H12V8H16L9 15L2 8H6z"],
  ["Four-point star", "M9 1L11 6L16 8L11 10L9 15L7 10L2 8L7 6z"], ["Five-point star", "M9 0L11 6H17L12 9L14 15L9 11L4 15L6 9L1 6H7z"],
  ["Six-point star", "M9 0L11 4H16L14 8L16 12H11L9 16L7 12H2L4 8L2 4H7z"]
];
document.getElementById("shapes").innerHTML = shapes.map(([name, d], i) =>
  `<button aria-label="${name}"><svg viewBox="0 0 18 16"><path d="${d}"${i < 2 ? ' fill="none"' : ""}/></svg></button>`
).join("");

const colors = [
  "#000000", "#7f7f7f", "#880015", "#ed1c24", "#ff7f27", "#fff200", "#22b14c", "#00a2e8", "#3f48cc", "#a349a4",
  "#ffffff", "#c3c3c3", "#b97a57", "#ffaec9", "#ffc90e", "#efe4b0", "#b5e61d", "#99d9ea", "#7092be", "#c8bfe7"
];
document.getElementById("palette-grid").innerHTML = Array.from({ length: 30 }, (_, i) =>
  colors[i]
    ? `<button class="filled" aria-label="${colors[i]}"><i style="background:${colors[i]}"></i></button>`
    : `<button aria-label="Custom color"></button>`
).join("");
```
